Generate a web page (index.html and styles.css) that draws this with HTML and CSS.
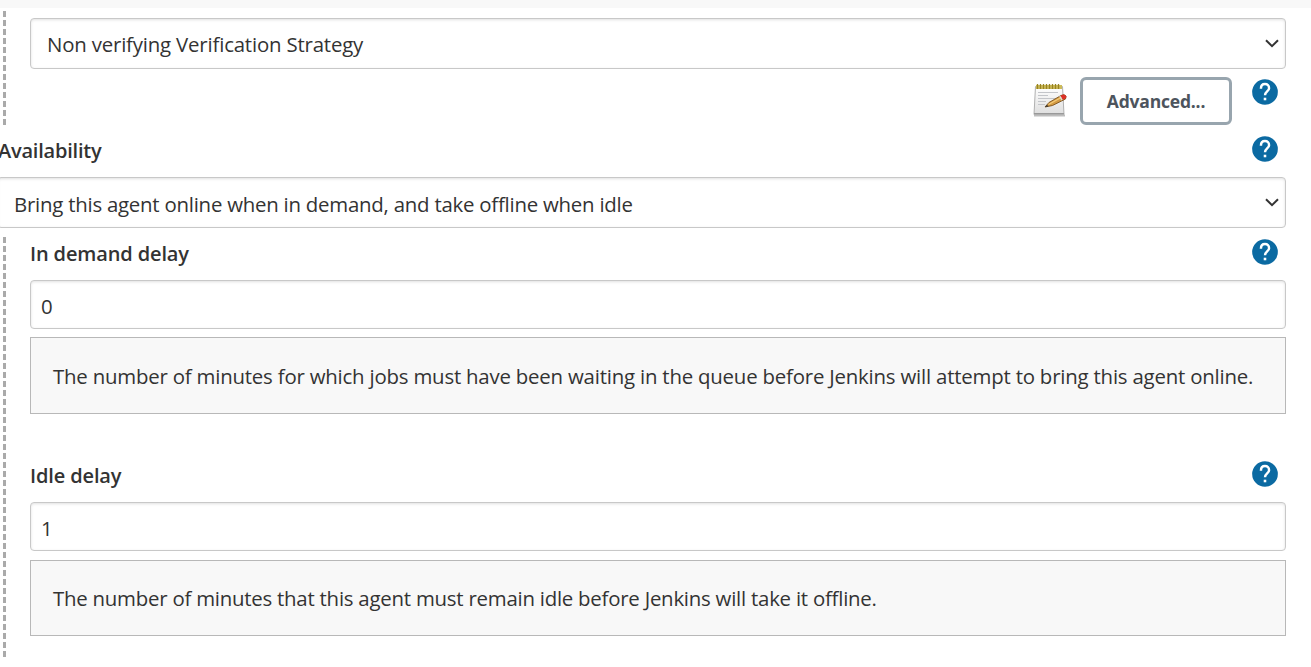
FILE: index.html
```html
<!DOCTYPE html>
<html lang="en">
<head>
<meta charset="utf-8">
<title>Configure agent</title>
<link rel="stylesheet" href="styles.css">
</head>
<body>
<svg class="defs" width="0" height="0">
  <symbol id="help" viewBox="0 0 24 24"><path d="M12 1a11 11 0 1 0 0 22 11 11 0 0 0 0-22z" fill="#0b6aa2"/><path d="M8.500 9.200C8.500 6.700 10 5.200 12 5.200s3.500 1.400 3.500 3.500c0 2.700-3.500 3-3.500 6.100" fill="none" stroke="#fff" stroke-width="2.100"/><path d="M10.900 16.900h2.200v2.200h-2.200z" fill="#fff"/></symbol>
  <symbol id="chevron" viewBox="0 0 14 9"><path d="M1 1.200 7 7.200 13 1.200" fill="none" stroke="#333" stroke-width="2"/></symbol>
</svg>
<div class="topbar"></div>
<main class="form">
  <section class="nested nested-first">
    <div class="select"><span class="t-strategy">Non verifying Verification Strategy</span><svg class="chevron"><use href="#chevron"/></svg></div>
    <div class="actions">
      <svg class="notepad" viewBox="0 0 36 36">
        <defs><linearGradient id="paper" x1="0" y1="0" x2="0" y2="1"><stop offset="0" stop-color="#fff"/><stop offset="1" stop-color="#dedede"/></linearGradient></defs>
        <path d="M2 33.500h31" stroke="#bdbdbd" stroke-width="2"/>
        <path d="M3.500 4.500h27l1.500 28h-30z" fill="url(#paper)" stroke="#b0b0b0"/>
        <path d="M2 31.500h30" stroke="#999"/>
        <path d="M4 3h26v4H4z" fill="#cdbb5a"/>
        <path d="M5.500 2v5M8.500 2v5M11.500 2v5M14.500 2v5M17.500 2v5M20.500 2v5M23.500 2v5M26.500 2v5" stroke="#978321" stroke-width="1.300"/>
        <path d="M6 10.500h20M6 13.500h10M6 16.500h18M6 19.500h8M6 22.500h7" stroke="#c3c5c9"/>
        <path d="M13 25l4-4.500 12-7 3-.8 2 1.300-.5 3-13 6.500z" fill="#d39a43" stroke="#79501c" stroke-width=".9"/>
        <path d="M16.500 22.500 30 15" stroke="#f4cc79" stroke-width="1.300"/>
        <path d="M28.500 13.700l2.500-1.200q3 0 3.500 2.500l-1 1.500-2.700 1.300z" fill="#dc3027"/>
        <path d="M27.800 14.100l2.200 4" stroke="#ddd" stroke-width="1.200"/>
        <path d="M13 25l2-2.300 1.400 1.700z" fill="#333"/>
      </svg>
      <button class="advanced"><span class="t-advanced">Advanced...</span></button>
      <svg class="help help-advanced"><use href="#help"/></svg>
    </div>
  </section>
  <div class="label-row availability"><span class="label t-availability">Availability</span><svg class="help"><use href="#help"/></svg></div>
  <div class="select select-wide"><span class="t-bring">Bring this agent online when in demand, and take offline when idle</span><svg class="chevron"><use href="#chevron"/></svg></div>
  <section class="nested nested-second">
    <div class="label-row"><span class="label t-demand">In demand delay</span><svg class="help"><use href="#help"/></svg></div>
    <div class="input">0</div>
    <div class="hint"><span class="t-hint-demand">The number of minutes for which jobs must have been waiting in the queue before Jenkins will attempt to bring this agent online.</span></div>
    <div class="label-row idle"><span class="label t-idle">Idle delay</span><svg class="help"><use href="#help"/></svg></div>
    <div class="input">1</div>
    <div class="hint hint-idle"><span class="t-hint-idle">The number of minutes that this agent must remain idle before Jenkins will take it offline.</span></div>
  </section>
</main>
</body>
</html>
```
FILE: styles.css
```css
* { box-sizing: border-box; }
body { margin: 0; height: 667px; overflow: hidden; background: #fff; color: #333; font: 20.4px/28px "Open Sans", "Noto Sans", sans-serif; letter-spacing: -.2px; white-space: nowrap; }
svg { display: block; flex: none; }
.defs { position: absolute; }
.topbar { height: 8px; background: #f8f8f8; }
.form { padding: 3px 25px 0 0; }
.nested { padding-left: 30px; background: repeating-linear-gradient(#aaa 0 6px, transparent 6px 9px) 3px 0 / 3px 100% no-repeat; }
.nested-first { height: 114px; padding-top: 7px; }
.nested-second { height: 420px; margin-top: 9px; }
.select, .input { display: flex; align-items: center; border: 1px solid #c8c8c8; border-radius: 4px; background: #fff; box-shadow: inset 0 1px 3px rgba(0,0,0,.12); }
.select { height: 51px; justify-content: space-between; padding: 0 6px 0 16px; }
.chevron { width: 14px; height: 9px; margin-top: -1px; }
.select-wide { margin-left: -3px; }
.t-strategy { letter-spacing: -.18px; }
.t-bring { letter-spacing: -.23px; padding-top: 2px; }
.t-hint-idle { letter-spacing: -.23px; }
.actions { display: flex; margin-top: 8px; height: 48px; justify-content: flex-end; padding-right: 7px; }
.notepad { width: 36px; height: 36px; margin: 5px 12px 0 0; }
.advanced { width: 152px; height: 48px; padding: 0; border: 3px solid #98a5ae; border-radius: 6px; background: #fff; color: #4d545d; font: 700 17.5px/26px "Open Sans", sans-serif; letter-spacing: -.2px; }
.help { width: 28px; height: 28px; }
.help-advanced { margin: 1px 0 0 19px; }
.label-row { display: flex; justify-content: space-between; height: 43px; padding: 1px 7px 0 0; }
.label { font-size: 20px; font-weight: 600; letter-spacing: -.13px; margin-top: 2px; }
.availability { height: 52px; padding-top: 10px; }
.t-availability { margin-left: -2px; letter-spacing: -.22px; }
.input { height: 49px; padding: 3px 10px 0; }
.hint { display: flex; align-items: center; height: 77px; margin-top: 8px; padding: 0 22px; border: 1px solid #b8b8b8; background: #f8f8f8; }
.idle { height: 88px; padding-top: 46px; }
.hint-idle { height: 76px; margin-top: 9px; }
```
